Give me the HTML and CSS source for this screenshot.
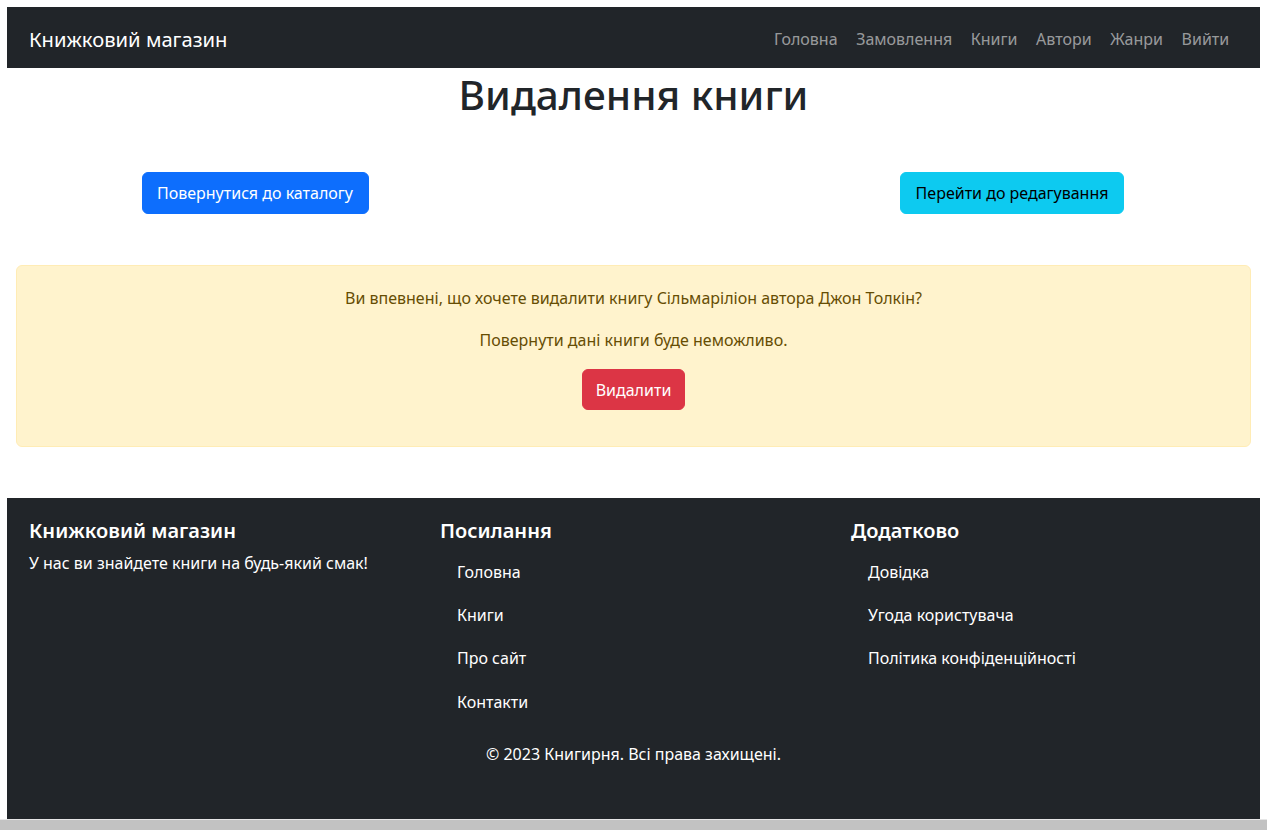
FILE: index.html
```html
<!DOCTYPE html>
<html lang="uk">
<head>
<meta charset="utf-8">
<title>Видалення книги</title>
<link rel="stylesheet" href="styles.css">
</head>
<body>
<div class="page">
  <nav class="navbar">
    <a class="brand" href="#">Книжковий магазин</a>
    <ul class="nav-links">
      <li><a href="#">Головна</a></li>
      <li><a href="#">Замовлення</a></li>
      <li><a href="#">Книги</a></li>
      <li><a href="#">Автори</a></li>
      <li><a href="#">Жанри</a></li>
      <li><a href="#">Вийти</a></li>
    </ul>
  </nav>

  <main class="content">
    <h1 class="page-title">Видалення книги</h1>

    <div class="actions">
      <a class="btn btn-primary" href="#">Повернутися до каталогу</a>
      <a class="btn btn-info" href="#">Перейти до редагування</a>
    </div>

    <div class="alert">
      <p>Ви впевнені, що хочете видалити книгу Сільмаріліон автора Джон Толкін?</p>
      <p>Повернути дані книги буде неможливо.</p>
      <form class="delete-form">
        <button type="button" class="btn btn-danger">Видалити</button>
      </form>
    </div>
  </main>

  <footer class="footer">
    <div class="footer-row">
      <div class="footer-col">
        <h5>Книжковий магазин</h5>
        <p>У нас ви знайдете книги на будь-який смак!</p>
      </div>
      <div class="footer-col">
        <h5>Посилання</h5>
        <ul class="footer-links">
          <li><a href="#">Головна</a></li>
          <li><a href="#">Книги</a></li>
          <li><a href="#">Про сайт</a></li>
          <li><a href="#">Контакти</a></li>
        </ul>
      </div>
      <div class="footer-col">
        <h5>Додатково</h5>
        <ul class="footer-links">
          <li><a href="#">Довідка</a></li>
          <li><a href="#">Угода користувача</a></li>
          <li><a href="#">Політика конфіденційності</a></li>
        </ul>
      </div>
    </div>
    <p class="copyright">© 2023 Книгирня. Всі права захищені.</p>
  </footer>
</div>
<div class="scroll-strip"></div>
</body>
</html>
```

FILE: styles.css
```css
* {
  box-sizing: border-box;
}

html,
body {
  margin: 0;
  padding: 0;
  background: #fff;
}

body {
  font-family: "Noto Sans", "Open Sans", sans-serif;
  font-size: 16px;
  line-height: 26px;
  color: #212529;
  height: 830px;
  overflow: hidden;
  display: flex;
  flex-direction: column;
}

.page {
  margin: 7px 7px 0;
  flex: 1;
}

a {
  text-decoration: none;
}

/* Top navigation */
.navbar {
  height: 61px;
  background: #212529;
  display: flex;
  align-items: center;
  justify-content: space-between;
  padding: 0 22px;
}

.brand {
  color: #fff;
  font-size: 20.2px;
  line-height: 26px;
  margin-top: 2px;
}

.nav-links {
  list-style: none;
  margin: 2px 0 0;
  padding: 0;
  display: flex;
  gap: 1px;
}

.nav-links a {
  display: block;
  padding: 0 8.8px;
  color: rgba(255, 255, 255, 0.55);
  font-size: 16px;
}

/* Main area */
.content {
  padding: 0 9px;
}

.page-title {
  margin: 0;
  text-align: center;
  font-size: 40.5px;
  line-height: 53px;
  font-weight: 500;
}

.actions {
  display: flex;
  justify-content: space-between;
  padding: 0 127px 0 126px;
  margin-top: 51px;
}

.btn {
  display: inline-block;
  border: 1px solid transparent;
  border-radius: 6px;
  font-family: inherit;
  font-size: 16px;
  line-height: 26px;
  padding: 7px 14px;
  cursor: pointer;
}

.btn-primary {
  background: #0d6efd;
  border-color: #0d6efd;
  color: #fff;
  padding-right: 15px;
}

.btn-info {
  background: #0dcaf0;
  border-color: #0dcaf0;
  color: #000;
  padding: 7px 14.5px;
}

.btn-danger {
  background: #dc3545;
  border-color: #dc3545;
  color: #fff;
  padding: 6px 13px;
  line-height: 26px;
  height: 41px;
}

.alert {
  margin-top: 51px;
  background: #fff3cd;
  border: 1px solid #ffecb5;
  border-radius: 6px;
  color: #664d03;
  text-align: center;
  padding: 19px 16px 36px;
}

.alert p {
  margin: 0 0 16px;
}

.delete-form {
  margin: 0;
  display: flex;
  justify-content: center;
}

/* Footer */
.footer {
  margin-top: 51px;
  background: #212529;
  color: #fff;
  height: 321px;
  padding: 20px 10px 0;
}

.footer-row {
  display: grid;
  grid-template-columns: repeat(3, 1fr);
}

.footer-col {
  padding: 0 12px;
}

.footer-col h5 {
  margin: 0 0 6px;
  font-size: 20px;
  line-height: 26px;
  font-weight: 600;
}

.footer-col p {
  margin: 0;
}

.footer-links {
  list-style: none;
  margin: 0;
  padding: 0;
}

.footer-links a {
  display: block;
  padding: 8.7px 17px;
  color: #fff;
}

.copyright {
  margin: 0;
  padding-top: 17px;
  text-align: center;
}

.scroll-strip {
  height: 11px;
  background: #c2c2c2;
  border-top: 1px solid #e6e6e6;
}
```
